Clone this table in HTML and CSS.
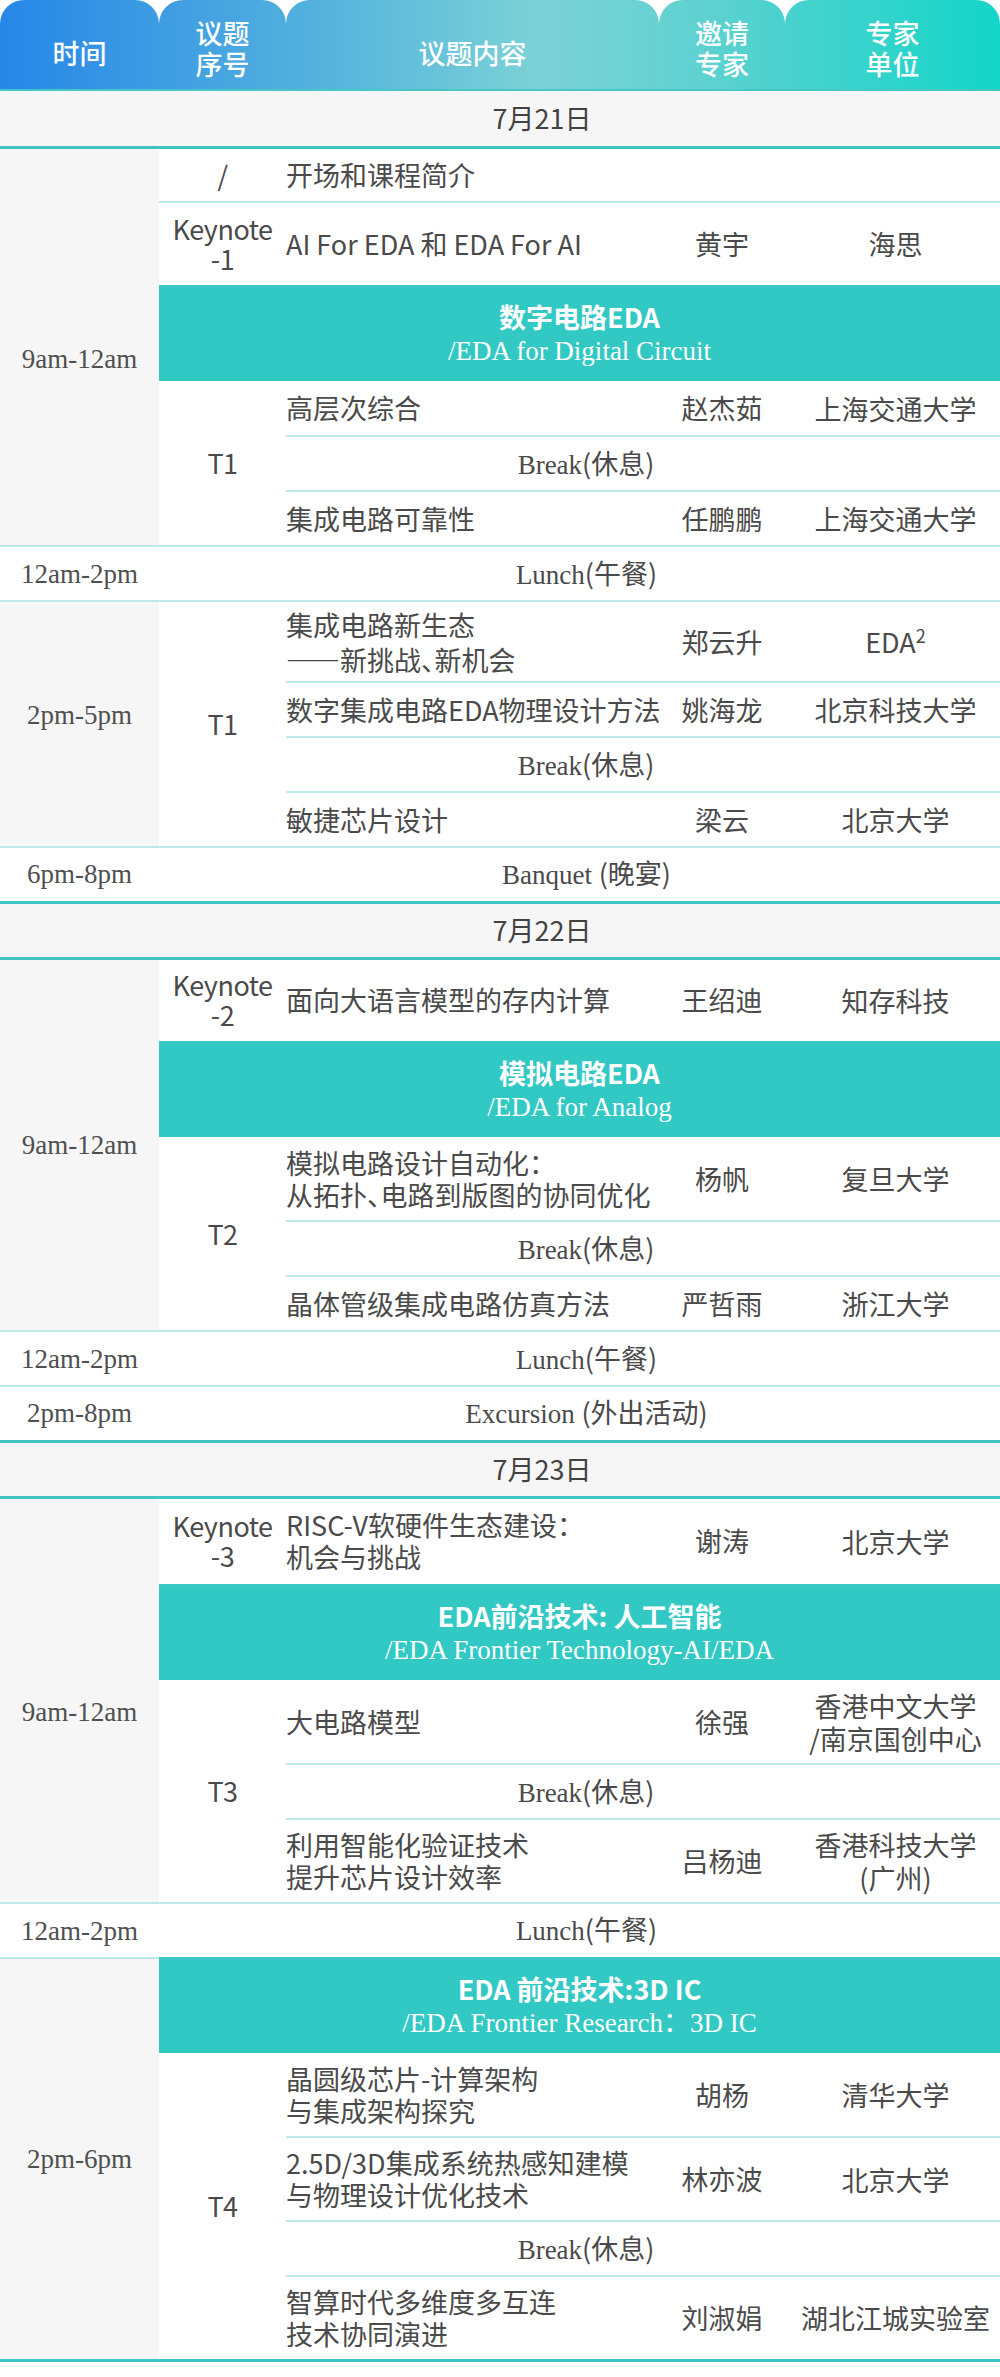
FILE: index.html
```html
<!DOCTYPE html>
<html lang="zh-CN">
<head>
  <meta charset="UTF-8" />
  <meta name="viewport" content="width=device-width, initial-scale=1.0"/>
  <title>课程日程</title>
  <link rel="stylesheet" href="styles.css">
</head>
<body>

  <!-- Header tabs -->
  <div class="head">
    <div class="tab tab-time one">时间</div>
    <div class="tab tab-no">议题<br>序号</div>
    <div class="tab tab-topic one">议题内容</div>
    <div class="tab tab-expert">邀请<br>专家</div>
    <div class="tab tab-unit">专家<br>单位</div>
  </div>

  <table class="agenda">
    <colgroup>
      <col class="c-time"><col class="c-no"><col class="c-topic"><col class="c-expert"><col class="c-unit">
    </colgroup>
    <tbody>

      <!-- Day 1 -->
      <tr class="day first"><td colspan="5">7月21日</td></tr>
      <tr>
        <td class="time low" rowspan="6">9am-12am</td>
        <td class="no">/</td>
        <td class="topic">开场和课程简介</td>
        <td></td>
        <td class="unit"></td>
      </tr>
      <tr class="tall">
        <td class="no">Keynote<br>-1</td>
        <td class="topic">AI For EDA 和 EDA For AI</td>
        <td>黄宇</td>
        <td class="unit">海思</td>
      </tr>
      <tr class="sec">
        <td class="band" colspan="4"><b>数字电路EDA</b><br><span class="en">/EDA for Digital Circuit</span></td>
      </tr>
      <tr>
        <td class="no" rowspan="3">T1</td>
        <td class="topic">高层次综合</td>
        <td>赵杰茹</td>
        <td class="unit">上海交通大学</td>
      </tr>
      <tr>
        <td class="brk" colspan="3"><span class="en">Break</span>(休息)</td>
      </tr>
      <tr>
        <td class="topic">集成电路可靠性</td>
        <td>任鹏鹏</td>
        <td class="unit">上海交通大学</td>
      </tr>
      <tr>
        <td class="time plain">12am-2pm</td>
        <td class="pause" colspan="4"><span class="en">Lunch</span>(午餐)</td>
      </tr>
      <tr class="mid">
        <td class="time high" rowspan="4">2pm-5pm</td>
        <td class="no" rowspan="4">T1</td>
        <td class="topic loose">集成电路新生态<br><span class="dash">——</span>新挑战<span class="hw">、</span>新机会</td>
        <td>郑云升</td>
        <td class="unit">EDA<sup>2</sup></td>
      </tr>
      <tr>
        <td class="topic">数字集成电路EDA物理设计方法</td>
        <td>姚海龙</td>
        <td class="unit">北京科技大学</td>
      </tr>
      <tr>
        <td class="brk" colspan="3"><span class="en">Break</span>(休息)</td>
      </tr>
      <tr>
        <td class="topic">敏捷芯片设计</td>
        <td>梁云</td>
        <td class="unit">北京大学</td>
      </tr>
      <tr>
        <td class="time plain">6pm-8pm</td>
        <td class="pause" colspan="4"><span class="en">Banquet </span>(晚宴)</td>
      </tr>

      <!-- Day 2 -->
      <tr class="day"><td colspan="5">7月22日</td></tr>
      <tr class="tall">
        <td class="time" rowspan="5">9am-12am</td>
        <td class="no">Keynote<br>-2</td>
        <td class="topic">面向大语言模型的存内计算</td>
        <td>王绍迪</td>
        <td class="unit">知存科技</td>
      </tr>
      <tr class="sec">
        <td class="band" colspan="4"><b>模拟电路EDA</b><br><span class="en">/EDA for Analog</span></td>
      </tr>
      <tr class="tall">
        <td class="no" rowspan="3">T2</td>
        <td class="topic">模拟电路设计自动化：<br>从拓扑<span class="hw">、</span>电路到版图的协同优化</td>
        <td>杨帆</td>
        <td class="unit">复旦大学</td>
      </tr>
      <tr>
        <td class="brk" colspan="3"><span class="en">Break</span>(休息)</td>
      </tr>
      <tr>
        <td class="topic">晶体管级集成电路仿真方法</td>
        <td>严哲雨</td>
        <td class="unit">浙江大学</td>
      </tr>
      <tr>
        <td class="time plain">12am-2pm</td>
        <td class="pause" colspan="4"><span class="en">Lunch</span>(午餐)</td>
      </tr>
      <tr>
        <td class="time plain">2pm-8pm</td>
        <td class="pause" colspan="4"><span class="en">Excursion </span>(外出活动)</td>
      </tr>

      <!-- Day 3 -->
      <tr class="day"><td colspan="5">7月23日</td></tr>
      <tr class="tall big">
        <td class="time low" rowspan="5">9am-12am</td>
        <td class="no">Keynote<br>-3</td>
        <td class="topic">RISC-V软硬件生态建设<span class="hw">：</span><br>机会与挑战</td>
        <td>谢涛</td>
        <td class="unit">北京大学</td>
      </tr>
      <tr class="sec">
        <td class="band" colspan="4"><b>EDA前沿技术: 人工智能</b><br><span class="en">/EDA Frontier Technology-AI/EDA</span></td>
      </tr>
      <tr class="tall">
        <td class="no" rowspan="3">T3</td>
        <td class="topic">大电路模型</td>
        <td>徐强</td>
        <td class="unit">香港中文大学<br>/南京国创中心</td>
      </tr>
      <tr>
        <td class="brk" colspan="3"><span class="en">Break</span>(休息)</td>
      </tr>
      <tr class="tall">
        <td class="topic">利用智能化验证技术<br>提升芯片设计效率</td>
        <td>吕杨迪</td>
        <td class="unit">香港科技大学<br>(广州)</td>
      </tr>
      <tr>
        <td class="time plain">12am-2pm</td>
        <td class="pause" colspan="4"><span class="en">Lunch</span>(午餐)</td>
      </tr>
      <tr class="sec">
        <td class="time" rowspan="5">2pm-6pm</td>
        <td class="band" colspan="4"><b>EDA 前沿技术:3D IC</b><br><span class="en">/EDA Frontier Research：3D IC</span></td>
      </tr>
      <tr class="tall">
        <td class="no" rowspan="4">T4</td>
        <td class="topic">晶圆级芯片-计算架构<br>与集成架构探究</td>
        <td>胡杨</td>
        <td class="unit">清华大学</td>
      </tr>
      <tr class="tall">
        <td class="topic">2.5D/3D集成系统热感知建模<br>与物理设计优化技术</td>
        <td>林亦波</td>
        <td class="unit">北京大学</td>
      </tr>
      <tr>
        <td class="brk" colspan="3"><span class="en">Break</span>(休息)</td>
      </tr>
      <tr class="tall">
        <td class="topic">智算时代多维度多互连<br>技术协同演进</td>
        <td>刘淑娟</td>
        <td class="unit">湖北江城实验室</td>
      </tr>

    </tbody>
  </table>

</body>
</html>
```

FILE: styles.css
```css
* { box-sizing: border-box; margin: 0; padding: 0; }
body { font-family: "Noto Sans CJK SC", "Noto Sans", sans-serif; font-size: 27px; color: #4a4a4a; background: #fff; width: 1000px; }

/* header tabs */
.head { display: flex; height: 91px; border-bottom: 2px solid #46c7c6; }
.tab { display: flex; align-items: center; justify-content: center; text-align: center; padding-top: 6px; color: #fff; font-weight: 500; line-height: 31px; border-radius: 24px 24px 0 0; background: linear-gradient(90deg, #2786e8 0%, #56b4dd 33%, #7bd2d6 54%, #5fd1d0 70%, #14d5c8 100%); background-attachment: fixed; }
.tab.one { padding-top: 16px; }
.tab-time { width: 159px; }
.tab-no { width: 127px; }
.tab-topic { width: 373px; }
.tab-expert { width: 126px; }
.tab-unit { width: 215px; }

/* agenda table */
.agenda { width: 1000px; border-collapse: collapse; table-layout: fixed; border-bottom: 3px solid #3ec5c4; }
.c-time { width: 159px; }
.c-no { width: 127px; }
.c-topic { width: 373px; }
.c-expert { width: 126px; }
.c-unit { width: 215px; }
.agenda td { height: 55px; padding: 0; border-bottom: 2px solid #bfe9e8; text-align: center; vertical-align: middle; line-height: 32px; white-space: nowrap; }
.agenda tr.tall td { height: 84px; }
.agenda tr.big td { height: 88px; }
.agenda tr.mid td { height: 81px; }

.day td { height: 56px; background: #f6f6f6; border-top: 3px solid #3ec5c4; border-bottom: 3px solid #3ec5c4 !important; padding-left: 84px !important; color: #424242; }
.day.first td { border-top: 0; }

.time { background: #f6f6f6; font-family: "Liberation Serif", "Noto Sans CJK SC", serif; color: #4f4f4f; }
.time.plain { background: #fff; }
.agenda td.time.low { padding-top: 24px; }
.agenda td.time.high { padding-bottom: 18px; }
.no { line-height: 30px !important; letter-spacing: -0.5px; }
.topic { text-align: left !important; }
.topic.loose { line-height: 35px !important; }
.dash { letter-spacing: -4px; margin-right: 4px; }
.hw { font-feature-settings: "halt"; }
.unit { padding-left: 6px !important; line-height: 33px !important; }
.unit sup { font-size: 18px; vertical-align: 10px; line-height: 0; }
.en { font-family: "Liberation Serif", serif; }
.brk { padding-right: 114px !important; }
.pause { padding-left: 14px !important; }

.sec .band { height: 95px; background: #32c9c5; color: #fff; border-top: 3px solid #3cc8c5; border-bottom: 0; }
.sec .band b { font-weight: 700; }
```
